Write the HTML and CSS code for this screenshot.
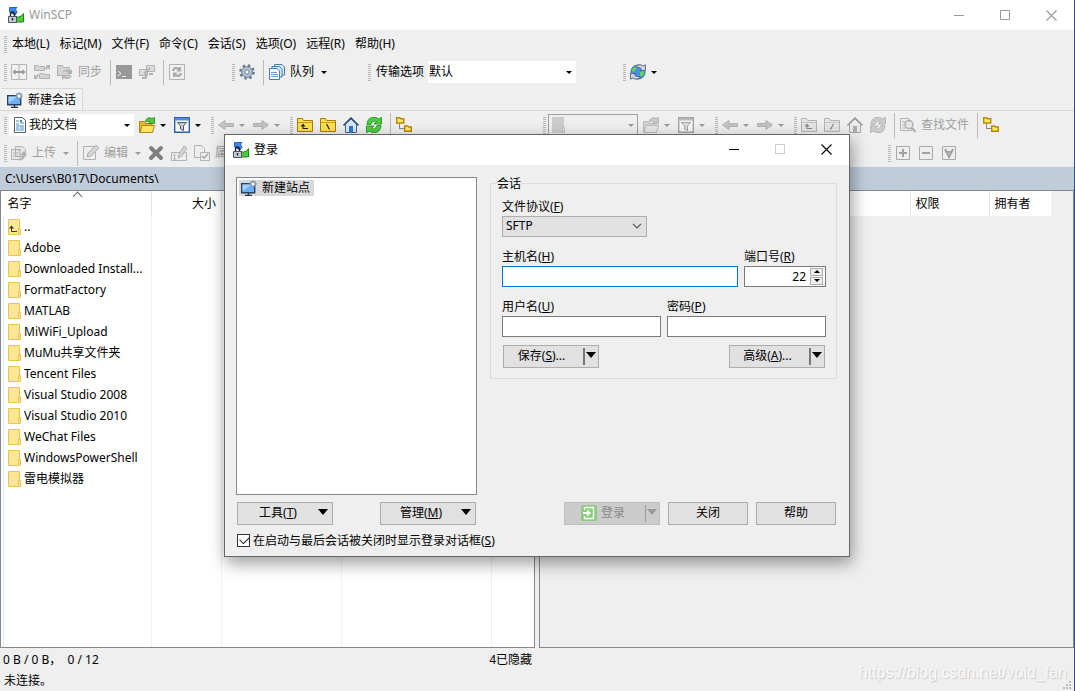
FILE: index.html
```html
<!DOCTYPE html>
<html lang="zh-CN">
<head>
<meta charset="utf-8">
<title>WinSCP</title>
<link rel="stylesheet" href="styles.css">
</head>
<body>
<svg class="sprite" aria-hidden="true">
  <symbol id="i-app" viewBox="0 0 16 16"><path d="M1.500.5h7.500L7.500 2l1.500 3.500-2 2.500L1.500 5z" fill="#3a86ee" stroke="#2763bd"/><path d="M15.500 6.500v8.500h-7V9l1.500 1.500L12 9l1 .5z" fill="#4dcb3b" stroke="#23851d"/><path d="M2.500 10V7.500a2 2.500 0 0 1 4 0V10" fill="none" stroke="#20242e" stroke-width="1.400"/><path d="M.5 9.500h8v6h-8z" fill="#c6cad2" stroke="#4a5364"/><path d="M4.500 11v2.500" stroke="#222" stroke-width="1.400"/></symbol>
  <symbol id="i-split" viewBox="0 0 16 16"><path d="M.5.5h15v15H.5zM8 1v14" fill="#f4f4f4" stroke="#777"/><path d="M1.500 8l3-3v2h7V5l3 3-3 3V9h-7v2z" fill="#444"/></symbol>
  <symbol id="i-syncdirs" viewBox="0 0 16 16"><path d="M.5 1.500h4l1 1h5v4H.5zM5.500 9.500h4l1 1h5v4h-10z" fill="#bbb" stroke="#777"/><path d="M12 1h4v5l-2-2-2 2-1-2 2-1zM4 15H0v-5l2 2 2-2 1 2-2 1z" fill="#777"/></symbol>
  <symbol id="i-sync" viewBox="0 0 16 16"><path d="M.5 1.500h5l1 2h6v8H.5z" fill="#bbb" stroke="#777"/><path d="M5 9c2-4 6-4 8-2l2-2v5h-5l1.500-1.500C10 7 7.500 7 5 9zm10 2c-1 4-5 5-8 3l-2 2v-5h5l-1.500 1.500c2 1 4 0 6.500-1.500z" fill="#777"/></symbol>
  <symbol id="i-term" viewBox="0 0 16 16"><path d="M0 1h16v14H0z" fill="#444"/><path d="M2 7l3 2.500L2 12M6 12.500h4" fill="none" stroke="#fff"/></symbol>
  <symbol id="i-hosts" viewBox="0 0 16 16"><path d="M7.500 1.500h8v6h-8zM.5 5.500h8v6h-8z" fill="#ccc" stroke="#777"/><path d="M10 10h4M3 14h4M5 9.500L11 4M7 9.500v5" stroke="#777" stroke-width="2"/></symbol>
  <symbol id="i-refresh" viewBox="0 0 16 16"><path d="M1 7.500C1 3 4 .5 7 .5h3.500L12 2 15.500.5V7H8l2.500-2.500C8 3.500 6 4.500 5 7.500z" fill="#4bd03e" stroke="#1d8a1c" stroke-width=".8"/><path d="M15 8.500c0 4.500-3 7-6 7H5.500L4 14 .5 15.500V9H8l-2.500 2.500c2.500 1 4.500 0 5.500-3z" fill="#4bd03e" stroke="#1d8a1c" stroke-width=".8"/></symbol>
  <symbol id="i-frame" viewBox="0 0 16 16"><path d="M.5.5h15v15H.5z" fill="#eee" stroke="#777"/><path d="M3 7c0-3 3-5 6-3.500L12 3v4.500H7.500L9 6C7 5 6 5 5 7zM13 9c0 3-3 5-6 3.500L4 13V8.500h4.500L7 10c2 1 3 1 4-1z" fill="#666"/></symbol>
  <symbol id="i-gear" viewBox="0 0 16 16"><circle cx="8" cy="8" r="6.500" fill="none" stroke="#6a7d96" stroke-width="2.600" stroke-dasharray="2.550 2.550"/><circle cx="8" cy="8" r="5.300" fill="#b9c6d6" stroke="#6b7e97"/><circle cx="8" cy="8" r="2.200" fill="#f4f7fa" stroke="#62748c"/></symbol>
  <symbol id="i-queue" viewBox="0 0 16 16"><path d="M5.500.5H13l2.500 2.500v8h-10z" fill="#dbeafa" stroke="#4a7bb0"/><path d="M3 2.500h7.500L13 5v8H3z" fill="#dbeafa" stroke="#4a7bb0"/><path d="M.5 4.500H8L10.500 7v8.500H.5z" fill="#fff" stroke="#4a7bb0"/><path d="M2 8.500h6M2 10.500h7M2 12.500h7" stroke="#6d9ccc"/></symbol>
  <symbol id="i-globe" viewBox="0 0 16 16"><circle cx="8" cy="8" r="7" fill="#3f90e8" stroke="#2d66a8"/><path d="M2 6c1-3 3-4 5-4L6 6 3 8zM10 8l4-1c1 3-1 5-4 6z" fill="#65d64f"/><path d="M5.500 3.500c1.500-3 5-3.500 7.500-1.500L15.500.8V6.500H10L11.500 5C10 3.500 8 3 5.500 3.500zM10.500 12.500c-1.500 3-5 3.500-7.500 1.500L.5 15.200V9.500H6L4.500 11c1.500 1.500 3.500 2 6 1.500z" fill="#cbd4df" stroke="#54657f" stroke-width=".9"/></symbol>
  <symbol id="i-monitor" viewBox="0 0 16 16"><path d="M.7 3.700h13v9H.7z" fill="#69b0f7" stroke="#2b405d" stroke-width="1.400"/><path d="M1.500 11V4.500H11z" fill="#a4d2ff"/><path d="M4 15.500h7M7.500 13v2" stroke="#26384e" stroke-width="1.500"/><circle cx="12" cy="4" r="2.300" fill="#fff" stroke="#8199b4" stroke-width="1.500"/><path d="M12 0v1.500M12 6.500V8M8 4h1.500M14.500 4H16M9.300 1.300l1 1M13.700 5.700l1 1M14.700 1.300l-1 1" stroke="#8199b4"/></symbol>
  <symbol id="i-doc" viewBox="0 0 13 16"><path d="M1.500.5h8l3 3v12h-11z" fill="#fff" stroke="#555d66"/><path d="M3 4h3M7 6h4M3 7h3M3 9h8M3 11h3M7 11h4M3 13h8" stroke="#3d8fc4"/><path d="M7 3h2v2H7z" fill="#3d8fc4"/></symbol>
  <symbol id="i-open" viewBox="0 0 16 16"><path d="M.5 15.500v-11h4.500l1 2h7v9z" fill="#e4b72c" stroke="#b58710"/><path d="M1 15.500l2-7h12.500l-2 7z" fill="#ffe463" stroke="#b58710"/><path d="M6 5c1-4 4-5 7-3.500L15.500.5v6h-6L11 5C9.500 4 8 4 6 5z" fill="#4cc63d" stroke="#248b20" stroke-width=".8"/></symbol>
  <symbol id="i-filter" viewBox="0 0 16 16"><path d="M.7.700h14.600v14.600H.7z" fill="#fff" stroke="#2662ad" stroke-width="1.400"/><path d="M1 1h14v2.500H1z" fill="#4e8bd6"/><path d="M3.500 5.500h9L9.500 9v4.500l-3-1.500V9z" fill="#c4ccd6" stroke="#4f5966"/></symbol>
  <symbol id="i-back" viewBox="0 0 16 16"><path d="M.5 8L7 3.500v3h8.500v3H7v3z" fill="#999" stroke="#777"/></symbol>
  <symbol id="i-fwd" viewBox="0 0 16 16"><path d="M15.500 8L9 3.500v3H.5v3H9v3z" fill="#999" stroke="#777"/></symbol>
  <symbol id="i-up" viewBox="0 0 16 16"><path d="M.5 14.500v-13h5l1 2h9v11z" fill="#ffe14d" stroke="#a57a0b"/><path d="M1 5.500h14" stroke="#c99d20"/><path d="M6 6.500L3.500 9.500h2V12H11v-1H6.500V9.500h2z" fill="#222"/></symbol>
  <symbol id="i-root" viewBox="0 0 16 16"><path d="M.5 14.500v-13h5l1 2h9v11z" fill="#ffe14d" stroke="#a57a0b"/><path d="M1 5.500h14" stroke="#c99d20"/><path d="M6.500 7l3 5.500" stroke="#222" stroke-width="1.200"/></symbol>
  <symbol id="i-root2" viewBox="0 0 16 16"><path d="M.5 14.500v-13h5l1 2h9v11z" fill="#ffe14d" stroke="#a57a0b"/><path d="M1 5.500h14" stroke="#c99d20"/><path d="M9.500 7l-3 5.500" stroke="#222" stroke-width="1.200"/></symbol>
  <symbol id="i-home" viewBox="0 0 16 16"><path d="M2.500 7v8.500h11V7L8 2z" fill="#d7e8fb" stroke="#40669a"/><path d="M6 9h4v6H6z" fill="#2d77d7"/><path d="M.5 8.500L8 1l7.500 7.500" fill="none" stroke="#395270" stroke-width="1.600"/></symbol>
  <symbol id="i-tree" viewBox="0 0 16 16"><path d="M.7 6V.700h3l1 1h3V6zM8.700 14.300V9h3l1 1h2.600v4.300z" fill="#fff056" stroke="#b8850d" stroke-width="1.400"/><path d="M3.500 7.500v4M3.500 11.500H8" fill="none" stroke="#222" stroke-dasharray="1 1"/></symbol>
  <symbol id="i-upload" viewBox="0 0 16 16"><path d="M.5 4.500H9v10H.5zM4.500 1.500h7l3 3v7h-10z" fill="#ddd" stroke="#777"/><path d="M2 8h6M2 11h5M6 5h4" stroke="#777"/><path d="M7 15c4-1 4-3 4-5H9l4-4 3 4h-2c0 4-3 6-7 5z" fill="#777"/></symbol>
  <symbol id="i-edit" viewBox="0 0 16 16"><path d="M.5 1.500h12v13H.5z" fill="#eee" stroke="#777"/><path d="M4 12l1-4 8-8 3 3-8 8z" fill="#bbb" stroke="#777"/></symbol>
  <symbol id="i-del" viewBox="0 0 16 16"><path d="M3 3l10 10M13 3L3 13" stroke="#111" stroke-width="4" stroke-linecap="round"/></symbol>
  <symbol id="i-rename" viewBox="0 0 16 16"><path d="M.5 7.500h15v8H.5z" fill="#eee" stroke="#777"/><path d="M2 10h3M3.500 10v4M2 14h3" stroke="#777"/><path d="M7 13l1-4 5-8 3 2-5 8z" fill="#bbb" stroke="#777"/></symbol>
  <symbol id="i-props" viewBox="0 0 16 16"><path d="M.5.500h7l3 3v9H.5z" fill="#eee" stroke="#777"/><path d="M6.500 7.500h9v8h-9z" fill="#eee" stroke="#777"/><path d="M8 11l2 2 4-4" fill="none" stroke="#555" stroke-width="1.500"/></symbol>
  <symbol id="i-find" viewBox="0 0 16 16"><path d="M.5 1.500h8l3 3v9H.5z" fill="#eee" stroke="#777"/><path d="M2 5h4M2 8h3M2 11h4" stroke="#777"/><circle cx="9" cy="7.500" r="4" fill="#ddd" stroke="#666" stroke-width="1.300"/><path d="M12 11l3.500 4" stroke="#666" stroke-width="2"/></symbol>
  <symbol id="i-plus" viewBox="0 0 14 14"><path d="M.5.500h13v13H.5z" fill="#eee" stroke="#666"/><path d="M3 7h8M7 3v8" stroke="#555" stroke-width="2"/></symbol>
  <symbol id="i-minus" viewBox="0 0 14 14"><path d="M.5.500h13v13H.5z" fill="#eee" stroke="#666"/><path d="M3 7h8" stroke="#555" stroke-width="2"/></symbol>
  <symbol id="i-all" viewBox="0 0 14 14"><path d="M.5.500h13v13H.5z" fill="#eee" stroke="#666"/><path d="M3 3l4 8 4-8M4.500 6h5" fill="none" stroke="#555" stroke-width="2"/></symbol>
  <symbol id="i-folder" viewBox="0 0 13 16"><path d="M.5.500h11v15H.5z" fill="#ffe694" stroke="#e9c64e"/><path d="M10.500 9.500h2v6h-2z" fill="#ffe694" stroke="#e9c64e"/></symbol>
  <symbol id="i-store" viewBox="0 0 13 16"><path d="M0 0h12v16H0z" fill="#aaa"/><path d="M10.500 9.500h2v6h-2z" fill="#ccc" stroke="#999"/></symbol>
  <symbol id="i-parent" viewBox="0 0 13 16"><path d="M.5.500h11v15H.5z" fill="#ffe694" stroke="#e9c64e"/><path d="M10.500 9.500h2v6h-2z" fill="#ffe694" stroke="#e9c64e"/><path d="M3.500 8v4.500H9" fill="none" stroke="#333"/><path d="M1 9.500l2.500-3 2.500 3z" fill="#333"/></symbol>
  <symbol id="i-login" viewBox="0 0 16 16"><rect width="16" height="16" rx="1.500" fill="#8ccb80"/><path d="M3.500 5V2.500h9v11h-9V11" fill="none" stroke="#fff" stroke-width="1.400"/><path d="M2 7h4V4.500L10 8l-4 3.500V9H2z" fill="#fff"/></symbol>
  <symbol id="i-min" viewBox="0 0 11 11"><path d="M0 5.500h10" stroke="currentColor"/></symbol>
  <symbol id="i-max" viewBox="0 0 11 11"><path d="M.5.500h9v9h-9z" fill="none" stroke="currentColor"/></symbol>
  <symbol id="i-close" viewBox="0 0 11 11"><path d="M.5.500l10 10M10.500.500l-10 10" stroke="currentColor" stroke-width="1.100"/></symbol>
  <symbol id="i-chev" viewBox="0 0 10 6"><path d="M1 .800l4 4 4-4" fill="none" stroke="#555" stroke-width="1.200"/></symbol>
</svg>

<div class="app">
  <header class="titlebar">
    <svg class="icon"><use href="#i-app"/></svg>
    <span class="title">WinSCP</span>
    <div class="winbtns">
      <button aria-label="最小化"><svg><use href="#i-min"/></svg></button>
      <button aria-label="最大化"><svg><use href="#i-max"/></svg></button>
      <button aria-label="关闭窗口"><svg><use href="#i-close"/></svg></button>
    </div>
  </header>

  <nav class="menubar">
    <i class="grip"></i>
    <button>本地(L)</button><button>标记(M)</button><button>文件(F)</button><button>命令(C)</button><button>会话(S)</button><button>选项(O)</button><button>远程(R)</button><button>帮助(H)</button>
  </nav>

  <div class="toolrow">
    <div class="toolbar">
      <i class="grip"></i>
      <button class="tb" disabled aria-label="比较"><svg class="icon"><use href="#i-split"/></svg></button>
      <button class="tb" disabled aria-label="同步浏览"><svg class="icon"><use href="#i-syncdirs"/></svg></button>
      <button class="tb" disabled><svg class="icon"><use href="#i-sync"/></svg><span>同步</span></button>
      <i class="sep"></i>
      <button class="tb" disabled aria-label="终端"><svg class="icon"><use href="#i-term"/></svg></button>
      <button class="tb" disabled aria-label="PuTTY"><svg class="icon"><use href="#i-hosts"/></svg></button>
      <i class="sep"></i>
      <button class="tb" disabled aria-label="保持更新"><svg class="icon"><use href="#i-frame"/></svg></button>
    </div>
    <div class="toolbar at-prefs">
      <i class="grip"></i>
      <button class="tb" aria-label="选项"><svg class="icon"><use href="#i-gear"/></svg></button>
      <i class="sep"></i>
      <button class="tb"><svg class="icon"><use href="#i-queue"/></svg><span>队列</span><b class="arr"></b></button>
    </div>
    <div class="toolbar at-transfer">
      <i class="grip"></i>
      <label for="preset" class="tlabel">传输选项</label>
      <div class="combo preset"><select id="preset"><option>默认</option></select><b class="arr"></b></div>
    </div>
    <div class="toolbar at-globe">
      <i class="grip"></i>
      <button class="tb drop" aria-label="更新"><svg class="icon"><use href="#i-globe"/></svg><b class="arr"></b></button>
    </div>
  </div>

  <div class="tabs"><button class="tab"><svg class="icon"><use href="#i-monitor"/></svg><span>新建会话</span></button></div>

  <main class="panes">
    <section class="pane">
      <div class="toolrow">
        <div class="toolbar">
          <i class="grip"></i>
          <div class="combo local"><svg class="docicon"><use href="#i-doc"/></svg><select aria-label="本地目录"><option>我的文档</option></select><b class="arr"></b></div>
          <button class="tb drop" aria-label="打开目录"><svg class="icon"><use href="#i-open"/></svg><b class="arr"></b></button>
          <button class="tb drop" aria-label="过滤"><svg class="icon"><use href="#i-filter"/></svg><b class="arr"></b></button>
        </div>
        <div class="toolbar next">
          <i class="grip"></i>
          <button class="tb drop" disabled aria-label="后退"><svg class="icon"><use href="#i-back"/></svg><b class="arr"></b></button>
          <button class="tb drop" disabled aria-label="前进"><svg class="icon"><use href="#i-fwd"/></svg><b class="arr"></b></button>
        </div>
        <div class="toolbar next">
          <i class="grip"></i>
          <button class="tb" aria-label="上级目录"><svg class="icon"><use href="#i-up"/></svg></button>
          <button class="tb" aria-label="根目录"><svg class="icon"><use href="#i-root"/></svg></button>
          <button class="tb" aria-label="主目录"><svg class="icon"><use href="#i-home"/></svg></button>
          <button class="tb" aria-label="刷新"><svg class="icon"><use href="#i-refresh"/></svg></button>
          <i class="sep"></i>
          <button class="tb" aria-label="目录树"><svg class="icon"><use href="#i-tree"/></svg></button>
        </div>
      </div>
      <div class="toolrow">
        <div class="toolbar">
          <i class="grip"></i>
          <button class="tb" disabled><svg class="icon"><use href="#i-upload"/></svg><span>上传</span><b class="arr"></b></button>
          <i class="sep"></i>
          <button class="tb" disabled><svg class="icon"><use href="#i-edit"/></svg><span>编辑</span><b class="arr"></b></button>
          <button class="tb" disabled aria-label="删除"><svg class="icon"><use href="#i-del"/></svg></button>
          <button class="tb" disabled aria-label="重命名"><svg class="icon"><use href="#i-rename"/></svg></button>
          <button class="tb" disabled><svg class="icon"><use href="#i-props"/></svg><span>属性</span></button>
        </div>
      </div>
      <div class="path">C:\Users\B017\Documents\</div>
      <div class="list local-list">
        <table class="files">
          <colgroup><col class="w-name"><col class="w-size"><col class="w-type"><col class="w-date"><col></colgroup>
          <thead><tr><th><span class="sorted">名字</span></th><th class="right">大小</th><th></th><th></th><th></th></tr></thead>
          <tbody>
            <tr><td><div class="file"><svg><use href="#i-parent"/></svg><span>..</span></div></td><td></td><td></td><td></td><td></td></tr>
            <tr><td><div class="file"><svg><use href="#i-folder"/></svg><span>Adobe</span></div></td><td></td><td></td><td></td><td></td></tr>
            <tr><td><div class="file"><svg><use href="#i-folder"/></svg><span>Downloaded Install...</span></div></td><td></td><td></td><td></td><td></td></tr>
            <tr><td><div class="file"><svg><use href="#i-folder"/></svg><span>FormatFactory</span></div></td><td></td><td></td><td></td><td></td></tr>
            <tr><td><div class="file"><svg><use href="#i-folder"/></svg><span>MATLAB</span></div></td><td></td><td></td><td></td><td></td></tr>
            <tr><td><div class="file"><svg><use href="#i-folder"/></svg><span>MiWiFi_Upload</span></div></td><td></td><td></td><td></td><td></td></tr>
            <tr><td><div class="file"><svg><use href="#i-folder"/></svg><span>MuMu共享文件夹</span></div></td><td></td><td></td><td></td><td></td></tr>
            <tr><td><div class="file"><svg><use href="#i-folder"/></svg><span>Tencent Files</span></div></td><td></td><td></td><td></td><td></td></tr>
            <tr><td><div class="file"><svg><use href="#i-folder"/></svg><span>Visual Studio 2008</span></div></td><td></td><td></td><td></td><td></td></tr>
            <tr><td><div class="file"><svg><use href="#i-folder"/></svg><span>Visual Studio 2010</span></div></td><td></td><td></td><td></td><td></td></tr>
            <tr><td><div class="file"><svg><use href="#i-folder"/></svg><span>WeChat Files</span></div></td><td></td><td></td><td></td><td></td></tr>
            <tr><td><div class="file"><svg><use href="#i-folder"/></svg><span>WindowsPowerShell</span></div></td><td></td><td></td><td></td><td></td></tr>
            <tr><td><div class="file"><svg><use href="#i-folder"/></svg><span>雷电模拟器</span></div></td><td></td><td></td><td></td><td></td></tr>
            <tr class="fill"><td></td><td></td><td></td><td></td><td></td></tr>
          </tbody>
        </table>
      </div>
      <div class="status"><span>0 B / 0 B，&nbsp; 0 / 12</span><span>4已隐藏</span></div>
    </section>

    <section class="pane">
      <div class="toolrow">
        <div class="toolbar">
          <i class="grip"></i>
          <div class="combo remote"><svg class="docicon"><use href="#i-store"/></svg><select aria-label="远程目录" disabled><option></option></select><b class="arr"></b></div>
          <button class="tb drop" disabled aria-label="打开远程目录"><svg class="icon"><use href="#i-open"/></svg><b class="arr"></b></button>
          <button class="tb drop" disabled aria-label="远程过滤"><svg class="icon"><use href="#i-filter"/></svg><b class="arr"></b></button>
        </div>
        <div class="toolbar next">
          <i class="grip"></i>
          <button class="tb drop" disabled aria-label="远程后退"><svg class="icon"><use href="#i-back"/></svg><b class="arr"></b></button>
          <button class="tb drop" disabled aria-label="远程前进"><svg class="icon"><use href="#i-fwd"/></svg><b class="arr"></b></button>
        </div>
        <div class="toolbar next">
          <i class="grip"></i>
          <button class="tb" disabled aria-label="远程上级目录"><svg class="icon"><use href="#i-up"/></svg></button>
          <button class="tb" disabled aria-label="远程根目录"><svg class="icon"><use href="#i-root2"/></svg></button>
          <button class="tb" disabled aria-label="远程主目录"><svg class="icon"><use href="#i-home"/></svg></button>
          <button class="tb" disabled aria-label="远程刷新"><svg class="icon"><use href="#i-refresh"/></svg></button>
          <i class="sep"></i>
          <button class="tb" disabled><svg class="icon"><use href="#i-find"/></svg><span>查找文件</span></button>
          <i class="sep"></i>
          <button class="tb" aria-label="远程目录树"><svg class="icon"><use href="#i-tree"/></svg></button>
        </div>
      </div>
      <div class="toolrow select-tools">
        <div class="toolbar">
          <i class="grip"></i>
          <button class="tb" disabled aria-label="选择"><svg class="icon-s"><use href="#i-plus"/></svg></button>
          <button class="tb" disabled aria-label="取消选择"><svg class="icon-s"><use href="#i-minus"/></svg></button>
          <button class="tb" disabled aria-label="全选"><svg class="icon-s"><use href="#i-all"/></svg></button>
        </div>
      </div>
      <div class="path"></div>
      <div class="list remote-list">
        <table class="files">
          <colgroup><col><col class="w-rights"><col class="w-owner"></colgroup>
          <thead><tr><th></th><th>权限</th><th>拥有者</th></tr></thead>
        </table>
      </div>
      <div class="status"></div>
    </section>
  </main>
  <footer class="footer">未连接。<svg class="sizer" viewBox="0 0 8 8"><path d="M6 0h2v2H6zM3 3h2v2H3zM6 3h2v2H6zM0 6h2v2H0zM3 6h2v2H3zM6 6h2v2H6z" fill="#bbb"/></svg></footer>
  <div class="watermark">https://blog.csdn.net/void_fan</div>
</div>

<div class="overlay">
  <form class="dialog" role="dialog" aria-labelledby="dlg-title">
    <header class="titlebar dlg-bar">
      <svg class="icon"><use href="#i-app"/></svg>
      <span class="title" id="dlg-title">登录</span>
      <div class="winbtns">
        <button type="button" aria-label="最小化对话框"><svg><use href="#i-min"/></svg></button>
        <button type="button" disabled aria-label="最大化对话框"><svg><use href="#i-max"/></svg></button>
        <button type="button" aria-label="关闭对话框"><svg><use href="#i-close"/></svg></button>
      </div>
    </header>
    <div class="dlg-body">
      <div class="sites"><div class="site"><svg class="icon"><use href="#i-monitor"/></svg><span>新建站点</span></div></div>
      <fieldset class="session">
        <legend>会话</legend>
        <div class="field proto">
          <label for="proto">文件协议(<u>F</u>)</label>
          <div class="select"><select id="proto"><option>SFTP</option></select><svg><use href="#i-chev"/></svg></div>
        </div>
        <div class="fields host-row">
          <div class="field"><label for="host">主机名(<u>H</u>)</label><input id="host" class="focus" type="text"></div>
          <div class="field"><label for="port">端口号(<u>R</u>)</label>
            <div class="spin"><input id="port" type="text" value="22"><div class="spinbtns"><button type="button" aria-label="增加"><b class="tri up"></b></button><button type="button" aria-label="减少"><b class="tri"></b></button></div></div>
          </div>
        </div>
        <div class="fields">
          <div class="field"><label for="user">用户名(<u>U</u>)</label><input id="user" type="text"></div>
          <div class="field"><label for="pass">密码(<u>P</u>)</label><input id="pass" type="password"></div>
        </div>
        <div class="actions">
          <button type="button" class="btn split"><span>保存(<u>S</u>)...</span><i></i><b class="big"></b></button>
          <button type="button" class="btn split"><span>高级(<u>A</u>)...</span><i></i><b class="big"></b></button>
        </div>
      </fieldset>
      <div class="actions left-actions">
        <button type="button" class="btn menu"><span>工具(<u>T</u>)</span><b class="big"></b></button>
        <button type="button" class="btn menu"><span>管理(<u>M</u>)</span><b class="big"></b></button>
      </div>
      <div class="right-actions">
        <button type="submit" class="btn split login" disabled><span><svg class="icon"><use href="#i-login"/></svg>登录</span><i></i><b class="big"></b></button>
        <button type="button" class="btn">关闭</button>
        <button type="button" class="btn">帮助</button>
      </div>
      <label class="check"><input type="checkbox" checked><span>在启动与最后会话被关闭时显示登录对话框(<u>S</u>)</span></label>
    </div>
  </form>
</div>
</body>
</html>
```
FILE: styles.css
```css
* { box-sizing: border-box; }
body {
  margin: 0;
  background: #efefef;
  color: #000;
  font: 12px/16px "Noto Sans", "Noto Sans CJK SC", sans-serif;
}
button, input, select { font: inherit; color: inherit; margin: 0; }
button { border: 0; padding: 0; background: none; white-space: nowrap; }
select { appearance: none; border: 0; background: none; min-width: 0; flex: 1; padding: 0; opacity: 1; }
svg { display: block; flex: none; }
.sprite { position: absolute; width: 0; height: 0; }
.icon { width: 16px; height: 16px; }
.icon-s { width: 14px; height: 14px; }

.app {
  position: relative;
  display: flex;
  flex-direction: column;
  height: 100vh;
  border-right: 1px solid #2c5288;
  overflow: hidden;
}

/* title bars */
.titlebar { display: flex; align-items: center; height: 30px; flex: none; padding-left: 8px; background: #fff; }
.titlebar .title { margin-left: 5px; color: #999; }
.winbtns { display: flex; margin-left: auto; color: #999; }
.winbtns button { display: flex; align-items: center; justify-content: center; width: 46px; height: 30px; }
.winbtns svg { width: 11px; height: 11px; }

/* menus and toolbars */
.menubar { display: flex; align-items: center; height: 28px; flex: none; padding-left: 4px; }
.menubar button { padding: 0 5px 0 4px; }
.menubar button + button { padding-left: 5px; }
.grip {
  flex: none;
  width: 3px;
  height: 17px;
  margin-right: 1px;
  background: repeating-linear-gradient(#b8b8b8 0 1px, transparent 1px 2px);
}
.toolrow { display: flex; align-items: center; height: 28px; flex: none; padding-left: 4px; }
.toolbar { display: flex; align-items: center; flex: none; }
.sep { flex: none; width: 1px; height: 25px; margin: 0 2px 0 4px; background: #bbb; }
.tb { display: flex; align-items: center; height: 24px; padding: 0 4px 0 3px; }
.tb span { margin-left: 5px; }
.arr { flex: none; margin: 0 0 0 7px; border: 3px solid transparent; border-top-color: #000; border-bottom: 0; }
.drop .arr { margin: 0 1px 0 5px; }
.tb:disabled { color: #a0a0a0; }
.tb:disabled svg { filter: grayscale(1); opacity: .5; }
.tb:disabled .arr { border-top-color: #999; }
.at-prefs { margin-left: 43px; }
.at-transfer { margin-left: 37px; }
.at-globe { margin-left: 47px; }
.tlabel { margin: 0 4px; }
.combo { display: flex; align-items: center; height: 22px; background: #fff; border: 1px solid #fff; }
.combo .arr { margin: 0 3px; }
.preset { width: 148px; }
.local { width: 125px; margin: 0 2px 0 1px; padding-left: 3px; }
.docicon { width: 13px; height: 16px; margin-right: 3px; }
.remote { width: 90px; margin: 0 2px 0 1px; padding-left: 3px; background: none; border-color: #a0a0a0; }
.remote svg { opacity: .5; }
.remote .arr { border-top-color: #999; }
.next { margin-left: 5px; }
.select-tools { padding-left: 349px; }
.select-tools .tb { padding: 0 5px 0 4px; }

/* session tabs */
.tabs { flex: none; display: flex; height: 25px; padding: 2px 0 0 2px; border-bottom: 1px solid #d8d8d8; }
.tab { display: flex; align-items: center; gap: 5px; padding: 0 6px 0 5px; border: 1px solid #d8d8d8; border-width: 1px 1px 0 0; background: #f2f2f2; }

/* panes */
.panes { flex: 1; min-height: 0; display: grid; grid-template-columns: 1fr 1fr; gap: 4px; }
.pane { display: flex; flex-direction: column; min-width: 0; min-height: 0; }
.path { flex: none; height: 23px; padding: 4px 5px 0; background: #bfcddb; }
.pane + .pane .path { margin-left: -4px; }
.list { flex: 1; min-height: 0; border: 1px solid #828790; overflow: hidden; }
.local-list { background: #fff; padding-left: 2px; }
.files { width: 100%; height: 100%; table-layout: fixed; border-collapse: collapse; }
.files th { height: 25px; padding: 0 5px; background: #fff; font-weight: normal; text-align: left; border-right: 1px solid #e5e5e5; }
.files th:first-child { padding-left: 4px; }
.files th.right { text-align: right; }
.files td { height: 21px; padding: 0; border-right: 1px solid #e9f1fa; }
.files td:first-child { border-left: 1px solid #e0eaf5; }
.files th:last-child, .local-list td:last-child { border-right: 0; }
.files .fill td { height: auto; }
.w-name { width: 148px; }
.w-size { width: 70px; }
.w-type { width: 120px; }
.w-date { width: 150px; }
.w-rights { width: 79px; }
.w-owner { width: 62px; }
.remote-list { padding-right: 22px; }
.remote-list .files { height: auto; }
.sorted { position: relative; display: block; }
.sorted::before {
  content: "";
  position: absolute;
  left: 48%;
  top: -3px;
  width: 6px;
  height: 6px;
  border: 1px solid #666;
  border-width: 1px 0 0 1px;
  transform: rotate(45deg);
}
.file { display: flex; align-items: center; gap: 3px; padding-left: 4px; white-space: nowrap; }
.file svg { width: 13px; height: 16px; }
.status { flex: none; display: flex; justify-content: space-between; height: 23px; padding: 4px 3px 0; }
.footer { flex: none; display: flex; justify-content: space-between; height: 20px; padding: 2px 3px 2px 4px; }
.sizer { align-self: end; width: 8px; height: 8px; }
.watermark {
  position: absolute;
  right: 7px;
  bottom: 8px;
  color: #f8f8f8;
  font: 16px/20px "Liberation Sans", sans-serif;
  text-shadow: 1px 1px 1px #c8c8c8;
}

/* login dialog */
.overlay { position: absolute; inset: 0 1px 1px 0; display: flex; align-items: center; justify-content: center; }
.dialog { width: 626px; border: 1px solid #666; background: #efefef; box-shadow: 2px 6px 16px rgba(0, 0, 0, .4); }
.dlg-bar .title, .dlg-bar .winbtns { color: #000; }
.dlg-bar .winbtns :disabled { color: #ccc; }
.dlg-body {
  display: grid;
  grid-template-columns: 241px 1fr;
  column-gap: 13px;
  padding: 12px 12px 7px 11px;
}
.sites { height: 318px; padding: 2px; border: 1px solid #828790; background: #fff; }
.site { display: inline-flex; align-items: center; height: 16px; padding-right: 4px; background: #d9d9d9; }
.site .icon { margin: 0 5px 0 2px; }
.session { align-self: start; min-width: 0; margin: 0; padding: 7px 10px 10px 11px; border: 1px solid #dcdcdc; }
.session legend { margin-left: -5px; padding: 0; line-height: 14px; }
.field { display: flex; flex-direction: column; min-width: 0; }
.field label { height: 18px; line-height: 18px; }
.field input, .select { height: 21px; border: 1px solid #7a7a7a; background: #fff; padding: 0 4px; border-radius: 0; outline: 0; }
.field input.focus { border-color: #0078d7; }
.proto { width: 145px; }
.select { display: flex; align-items: center; background: #e1e1e1; border-color: #adadad; padding: 0 4px 0 3px; }
.select svg { width: 10px; height: 6px; }
.fields { display: grid; grid-template-columns: 1fr 1fr; gap: 6px; margin-top: 11px; }
.host-row { grid-template-columns: 1fr 82px; }
.spin { display: flex; height: 21px; border: 1px solid #7a7a7a; background: #fff; }
.field .spin input { flex: 1; min-width: 0; height: 19px; border: 0; text-align: right; padding: 0 4px; background: none; }
.spinbtns { display: flex; flex-direction: column; gap: 1px; width: 15px; padding: 1px 2px 1px 0; }
.spinbtns button { flex: 1; display: flex; align-items: center; justify-content: center; background: #efefef; border: 1px solid #adadad; }
.tri { border: 3px solid transparent; border-top-color: #000; border-bottom: 0; }
.tri.up { border: 3px solid transparent; border-bottom-color: #000; border-top: 0; }
.actions { display: flex; justify-content: space-between; padding: 8px 1px 0; }
.btn { display: flex; align-items: center; justify-content: center; width: 80px; height: 23px; border: 1px solid #adadad; background: #e1e1e1; }
.btn span { flex: 1; display: flex; align-items: center; justify-content: center; }
.split, .menu { width: 96px; }
.split span { padding-right: 4px; }
.split i { width: 2px; height: 17px; background: #777; }
.big { border: 5px solid transparent; border-top: 6px solid #000; border-bottom: 0; margin: 0 2px 2px 1px; }
.menu .big { margin: 0 4px 2px 0; }
.right-actions { display: flex; justify-content: flex-end; gap: 8px; padding: 7px 1px 0; }
.login { background: #ccc; border-color: #bfbfbf; color: #8a8a8a; }
.login .icon { margin-right: 4px; }
.login i { width: 1px; background: #999; }
.login .big { border-top-color: #999; }
.left-actions { padding-top: 7px; }
.check { grid-column: 1 / -1; display: flex; align-items: center; gap: 3px; margin: 8px 0 0 1px; }
.check input {
  appearance: none;
  position: relative;
  width: 13px;
  height: 13px;
  border: 1px solid #333;
  background: #fff;
}
.check input:checked::before {
  content: "";
  position: absolute;
  left: 2px;
  top: 1px;
  width: 8px;
  height: 5px;
  border: 1px solid #222;
  border-width: 0 0 1px 1px;
  transform: rotate(-45deg);
}
```
